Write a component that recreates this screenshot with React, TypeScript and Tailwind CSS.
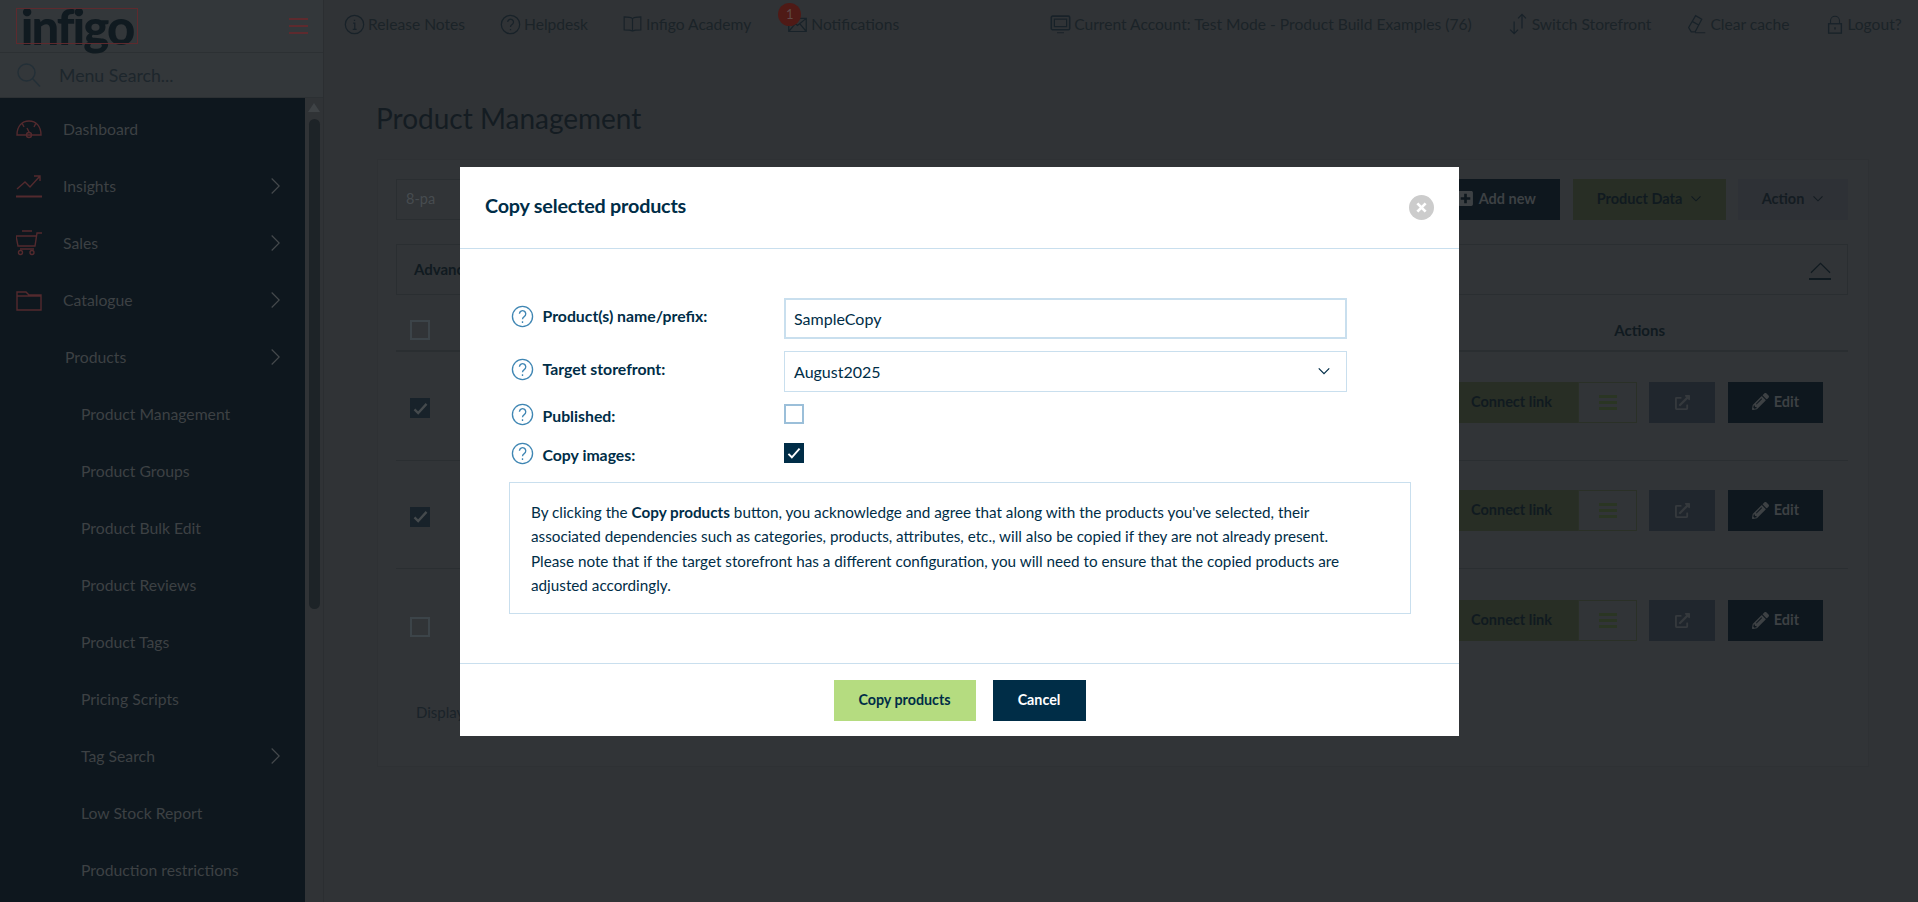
import React from "react";
import { FaExternalLinkAlt, FaPencilAlt, FaPlusSquare } from "react-icons/fa";

const font = { fontFamily: "Lato, 'Noto Sans', sans-serif" };

type IconProps = { className?: string };
const S = ({ className, children, vb = "0 0 24 24" }: { className?: string; children: React.ReactNode; vb?: string }) => (
  <svg viewBox={vb} fill="none" stroke="currentColor" strokeWidth="1.4" className={className}>{children}</svg>
);
const IInfo = (p: IconProps) => <S {...p}><circle cx="12" cy="12" r="10.5" /><path d="M12 6.5v1.6M10.5 10.5H12.3V17.5M10 17.5h4.4" /></S>;
const IHelp = (p: IconProps) => <S {...p}><circle cx="12" cy="12" r="10.5" /><path d="M8.8 9.2a3.3 3.3 0 1 1 5 2.9c-1.2.7-1.8 1.4-1.8 2.7M12 17v1.7" /></S>;
const IBook = (p: IconProps) => <S {...p}><path d="M12 5.5C10 3.8 6 3.5 2 3.5V19c4 0 8 0 10 1.5C14 19 18 19 22 19V3.5c-4 0-8 .3-10 2zM12 5.5v15" /></S>;
const IMail = (p: IconProps) => <S {...p}><path d="M2 5h20v15H2zM2 5l10 8 10-8M2 20l7.5-9M22 20l-7.5-9" /></S>;
const IMonitor = (p: IconProps) => <S {...p}><rect x="1.5" y="3" width="21" height="15.5" rx="1.5" strokeWidth="1.8" /><path d="M5 6.5h14v8.5H5zM8 22h8" /></S>;
const ISwitch = (p: IconProps) => <S {...p}><path d="M7 23V9M2.5 18.5 7 23l4.5-4.5M16 1v16M11.5 5.5 16 1l4.5 4.5" /></S>;
const IEraser = (p: IconProps) => <S {...p}><path d="M3 16 11 2.5l7 4L10.5 21H6zM7 9l7.5 4.2M10.5 22H22" /></S>;
const ILock = (p: IconProps) => <S {...p}><path d="M6 11V7a6 6 0 0 1 12 0v4" /><rect x="3.5" y="11" width="17" height="12.5" strokeWidth="1.8" /><path d="M12 15.5v3" strokeWidth="2" /></S>;
const ISearch = (p: IconProps) => <S {...p}><circle cx="9.5" cy="9.5" r="8.5" /><path d="m15.5 15.5 7.5 8" /></S>;
const IChevR = (p: IconProps) => <S vb="0 0 12 20" {...p}><path d="m2 1 9 9-9 9" /></S>;
const IChevD = (p: IconProps) => <S vb="0 0 16 10" {...p}><path d="m2 1.5 6 6 6-6" /></S>;
const IGauge = (p: IconProps) => <S vb="0 0 26 20" {...p}><path d="M1 16C1 7 6 2 13 2s12 5 12 14zM6 4l2 4M20 4l-2 4M11 9l2.5 5" /><circle cx="13" cy="16" r="2.5" /></S>;
const ITrend = (p: IconProps) => <S vb="0 0 26 24" {...p}><path d="M1 15 9 8l5 5L24 2M18 2h6v5" /><path d="M0 22.5h26" strokeWidth="2" /></S>;
const ICart = (p: IconProps) => <S vb="0 0 26 26" {...p}><path d="M26 3h-5l-2 13H2L0 6h20M6 1h10M4 19h14" /><circle cx="4.5" cy="22.5" r="2" /><circle cx="16" cy="22.5" r="2" /></S>;
const IFolder = (p: IconProps) => <S vb="0 0 26 22" {...p}><path d="M1 3h9l3 3h12v15H1zM1 7h24" /></S>;

const NavBtn = ({ icon, label, className }: { icon: React.ReactNode; label: string; className: string }) => (
  <div className={`flex items-center ${className}`}>
    {icon}
    <span className="ml-[3px] text-[15.6px] text-[#1b2328]">{label}</span>
  </div>
);

const SideItem = ({ icon, label, indent, chev }: { icon?: React.ReactNode; label: string; indent: string; chev?: boolean }) => (
  <div className="relative flex h-[57px] shrink-0 items-center text-[15.75px] text-[#3d4144]">
    {icon && <span className="flex w-[63px] justify-start pl-[16px] text-[#532a2e]">{icon}</span>}
    <span className={indent}>{label}</span>
    {chev && <IChevR className="absolute left-[270px] h-[18px] w-[10px] text-[#454a4d]" />}
  </div>
);

const Check = ({ on }: { on?: boolean }) => (
  <div className={`flex h-[20px] w-[20px] items-center justify-center border-2 ${on ? "border-[#18222a] bg-[#18222a]" : "border-[#3c4449] bg-transparent"}`}>
    {on && <svg viewBox="0 0 16 14" className="h-[13px] w-[15px] shrink-0 text-[#454a4d]" fill="none" stroke="currentColor" strokeWidth="2.5"><path d="m1.5 8 4 4 9-10" /></svg>}
  </div>
);

const Row = ({ on, h, last }: { on?: boolean; h: string; last?: boolean }) => (
  <div className={`flex ${h} items-center justify-between ${last ? "" : "border-b border-[#2a2e31]"}`}>
    <div className="ml-[14px] mt-[4px]"><Check on={on} /></div>
    <div className="mb-[8px] mr-[25px] flex h-[41px] items-stretch text-[14.5px] font-bold">
      <div className="flex w-[138px] items-center justify-end bg-[#282e25] pb-[1px] pr-[26px] text-[#101a20]">Connect link</div>
      <div className="flex w-[59px] items-center justify-center border border-[#2a3027]">
        <div className="flex h-[15px] w-[18px] shrink-0 flex-col justify-between">
          <div className="h-[3px] w-full bg-[#2a3523]" />
          <div className="h-[3px] w-full bg-[#2a3523]" />
          <div className="h-[3px] w-full bg-[#2a3523]" />
        </div>
      </div>
      <div className="ml-[12px] flex w-[66px] items-center justify-center bg-[#20262d] text-[#35393d]"><FaExternalLinkAlt className="h-[15px] w-[15px]" /></div>
      <div className="ml-[13px] flex w-[95px] items-center justify-center gap-[5px] bg-[#0e171e] pb-[1px] text-[#3d4144]"><FaPencilAlt className="h-[17px] w-[17px]" />Edit</div>
    </div>
  </div>
);

const Field = ({ label, up, children }: { label: string; up?: boolean; children: React.ReactNode }) => (
  <div className="flex h-full items-center">
    <IHelp className={`h-[23px] w-[23px] text-[#3f86b3] ${up ? "mb-[5px]" : ""}`} />
    <span className={`ml-[8.5px] w-[241.5px] text-[15.8px] font-bold leading-[20px] text-[#002d47] ${up ? "mb-[6px]" : "mt-[4px]"}`}>{label}</span>
    {children}
  </div>
);

export default function App() {
  return (
    <div style={font} className="relative flex h-[902px] w-full overflow-hidden bg-[#303336]">
      <aside className="flex h-full w-[324px] shrink-0 flex-col border-r border-[#2b2e31] bg-[#33373a]">
        <div className="relative flex h-[53px] items-center border-b border-[#2c3033]">
          <div className="relative ml-[16px] flex h-[36px] w-[122px] items-center justify-center">
            <span className="text-[49px] font-black leading-[42px] tracking-[-2px] text-[#101a20]">infigo</span>
            <div className="absolute inset-0 border border-[#5e2a2e]" />
          </div>
          <div className="ml-[151px] flex h-[16px] w-[19px] flex-col justify-between">
            <div className="h-[2px] bg-[#5e2a2e]" /><div className="h-[2px] bg-[#5e2a2e]" /><div className="h-[2px] bg-[#5e2a2e]" />
          </div>
        </div>
        <div className="flex h-[45px] items-center border-b border-[#2c3033] pl-[17px]">
          <ISearch className="h-[24px] w-[24px] text-[#232f37]" />
          <span className="ml-[18px] mt-[3px] text-[17.7px] text-[#1d262c]">Menu Search...</span>
        </div>
        <div className="flex flex-1 overflow-hidden">
          <nav className="flex w-[305px] flex-col bg-[#0e171e] pt-[2.5px]">
            <SideItem icon={<IGauge className="h-[20px] w-[26px]" />} label="Dashboard" indent="" />
            <SideItem icon={<ITrend className="h-[24px] w-[26px]" />} label="Insights" indent="" chev />
            <SideItem icon={<ICart className="h-[26px] w-[26px]" />} label="Sales" indent="" chev />
            <SideItem icon={<IFolder className="h-[22px] w-[26px]" />} label="Catalogue" indent="" chev />
            <SideItem label="Products" indent="ml-[65px]" chev />
            <SideItem label="Product Management" indent="ml-[81px]" />
            <SideItem label="Product Groups" indent="ml-[81px]" />
            <SideItem label="Product Bulk Edit" indent="ml-[81px]" />
            <SideItem label="Product Reviews" indent="ml-[81px]" />
            <SideItem label="Product Tags" indent="ml-[81px]" />
            <SideItem label="Pricing Scripts" indent="ml-[81px]" />
            <SideItem label="Tag Search" indent="ml-[81px]" chev />
            <SideItem label="Low Stock Report" indent="ml-[81px]" />
            <SideItem label="Production restrictions" indent="ml-[81px]" />
          </nav>
          <div className="flex w-[18px] flex-col items-center bg-[#303336] pt-[5px]">
            <div className="h-0 w-0 border-x-[6px] border-b-[9px] border-x-transparent border-b-[#3f4346]" />
            <div className="mt-[7px] h-[490px] w-[11px] rounded-full bg-[#1d2327]" />
          </div>
        </div>
      </aside>

      <main className="flex min-w-0 flex-1 flex-col">
        <header className="flex h-[49px] shrink-0 items-center">
          <NavBtn className="ml-[20px]" icon={<IInfo className="h-[21px] w-[21px] text-[#182229]" />} label="Release Notes" />
          <NavBtn className="ml-[35px]" icon={<IHelp className="h-[21px] w-[21px] text-[#182229]" />} label="Helpdesk" />
          <NavBtn className="ml-[34px]" icon={<IBook className="h-[20px] w-[21px] text-[#182229]" />} label="Infigo Academy" />
          <div className="relative ml-[36px] flex items-center">
            <span className="absolute -left-[9px] -top-[10px] flex h-[23px] w-[23px] items-center justify-center rounded-full bg-[#4f1a16] text-[13px] text-[#5e4a48]">1</span>
            <NavBtn className="" icon={<IMail className="h-[21px] w-[21px] text-[#182229]" />} label="Notifications" />
          </div>
          <NavBtn className="ml-[151px]" icon={<IMonitor className="h-[22px] w-[21px] text-[#182229]" />} label="Current Account: Test Mode - Product Build Examples (76)" />
          <NavBtn className="ml-[36px]" icon={<ISwitch className="h-[22px] w-[21px] text-[#182229]" />} label="Switch Storefront" />
          <NavBtn className="ml-[35px]" icon={<IEraser className="h-[22px] w-[21px] text-[#182229]" />} label="Clear cache" />
          <NavBtn className="ml-[37px]" icon={<ILock className="h-[23px] w-[18px] text-[#182229]" />} label="Logout?" />
        </header>

        <h1 className="ml-[52px] mt-[50px] text-[28px] font-normal leading-[38px] text-[#141c22]">Product Management</h1>

        <section className="ml-[53px] mr-[49px] mt-[22px] h-[608px] border border-[#2e3134] bg-[#313437] pl-[18px] pr-[20px] pt-[19px]">
          <div className="flex h-[41px] items-stretch text-[14.5px]">
            <div className="flex w-[300px] items-center border border-[#2a2e31] pb-[2px] pl-[9px] text-[#474c50]">8-pa</div>
            <div className="ml-auto flex w-[111px] items-center justify-end gap-[5px] bg-[#0e171e] pb-[2px] pr-[24px] font-bold text-[#3d4144]"><FaPlusSquare className="h-[17px] w-[17px]" />Add new</div>
            <div className="ml-[13px] flex w-[153px] items-center justify-center gap-[8px] bg-[#282e25] pb-[2px] font-bold text-[#101a20]">Product Data <IChevD className="h-[8px] w-[12px]" /></div>
            <div className="ml-[12px] flex w-[110px] items-center justify-center gap-[8px] bg-[#2e3136] pb-[2px] font-bold text-[#141c22]">Action <IChevD className="h-[8px] w-[12px]" /></div>
          </div>
          <div className="mt-[24px] flex h-[51px] items-center justify-between border border-[#2a2e31] pl-[17px] pr-[16px] text-[15px] font-bold text-[#101a20]">
            <span>Advanced search</span>
            <div className="mt-[2px] flex flex-col items-center">
              <svg viewBox="0 0 22 12" className="h-[12px] w-[21px]" fill="none" stroke="currentColor" strokeWidth="1.2"><path d="M1 11 11 1l10 10" /></svg>
              <div className="mt-[4px] h-[2px] w-[22px] bg-[#101a20]" />
            </div>
          </div>
          <div className="flex h-[57px] items-center border-b-2 border-[#2a2e31] pt-[15px]">
            <div className="ml-[14px]"><Check /></div>
            <span className="ml-auto mr-[183px] text-[15px] font-bold text-[#101a20]">Actions</span>
          </div>
          <Row on h="h-[109px]" />
          <Row on h="h-[108px]" />
          <Row h="h-[111px]" last />
          <div className="ml-[20px] mt-[21px] text-[15px] text-[#1a2329]">Displaying 1 to 3 of 3 items</div>
        </section>
      </main>

      <div className="absolute inset-0 flex justify-center pl-[1px] pt-[167px]">
        <div className="h-[569px] w-[999px] bg-white text-[#002d47]">
          <div className="flex h-[82px] items-center justify-between border-b border-[#c9dfee] pl-[25px] pr-[25px]">
            <h2 className="pb-[3px] text-[19.75px] font-bold tracking-[-0.2px]">Copy selected products</h2>
            <div className="flex h-[25px] w-[25px] items-center justify-center rounded-full bg-[#cccccc]">
              <svg viewBox="0 0 12 12" className="h-[11px] w-[11px]" stroke="#fff" strokeWidth="3"><path d="m1.5 1.5 9 9m0-9-9 9" /></svg>
            </div>
          </div>
          <div className="flex h-[415px] flex-col border-b border-[#c9dfee] pl-[49px] pr-[48px] pt-[49px]">
            <div className="ml-[2px] h-[41px]">
              <Field label="Product(s) name/prefix:" up>
                <div className="flex h-[41px] w-[563px] items-center border-2 border-[#c9dfee] pl-[8px] pt-[1px] text-[16px]">SampleCopy</div>
              </Field>
            </div>
            <div className="ml-[2px] mt-[12px] h-[41px]">
              <Field label="Target storefront:" up>
                <div className="flex h-[41px] w-[563px] items-center justify-between border border-[#c9dfee] pl-[9px] pr-[15px] text-[16px]">August2025<IChevD className="h-[9px] w-[14px]" /></div>
              </Field>
            </div>
            <div className="ml-[2px] mt-[12px] h-[20px]">
              <Field label="Published:">
                <div className="h-[20px] w-[20px] border-2 border-[#9bbfd9]" />
              </Field>
            </div>
            <div className="ml-[2px] mt-[19px] h-[20px]">
              <Field label="Copy images:">
                <div className="flex h-[20px] w-[20px] items-center justify-center bg-[#002d47]">
                  <svg viewBox="0 0 16 14" className="h-[12px] w-[14px]" fill="none" stroke="#fff" strokeWidth="2.2"><path d="m1.5 8 4 4 9-10" /></svg>
                </div>
              </Field>
            </div>
            <div className="mt-[19px] h-[132px] w-[902px] whitespace-nowrap border border-[#c9dfee] pl-[21px] pt-[17px] text-[15.25px] leading-[24.4px]">
              By clicking the <b>Copy products</b> button, you acknowledge and agree that along with the products you've selected, their<br />
              associated dependencies such as categories, products, attributes, etc., will also be copied if they are not already present.<br />
              Please note that if the target storefront has a different configuration, you will need to ensure that the copied products are<br />
              adjusted accordingly.
            </div>
          </div>
          <div className="flex justify-center gap-[17px] pt-[16px] text-[14.3px] font-bold">
            <div className="flex h-[41px] w-[142px] items-center justify-center bg-[#b5dc80] pb-[1px]">Copy products</div>
            <div className="flex h-[41px] w-[93px] items-center justify-center bg-[#002d47] pb-[1px] text-white">Cancel</div>
          </div>
        </div>
      </div>
    </div>
  );
}
